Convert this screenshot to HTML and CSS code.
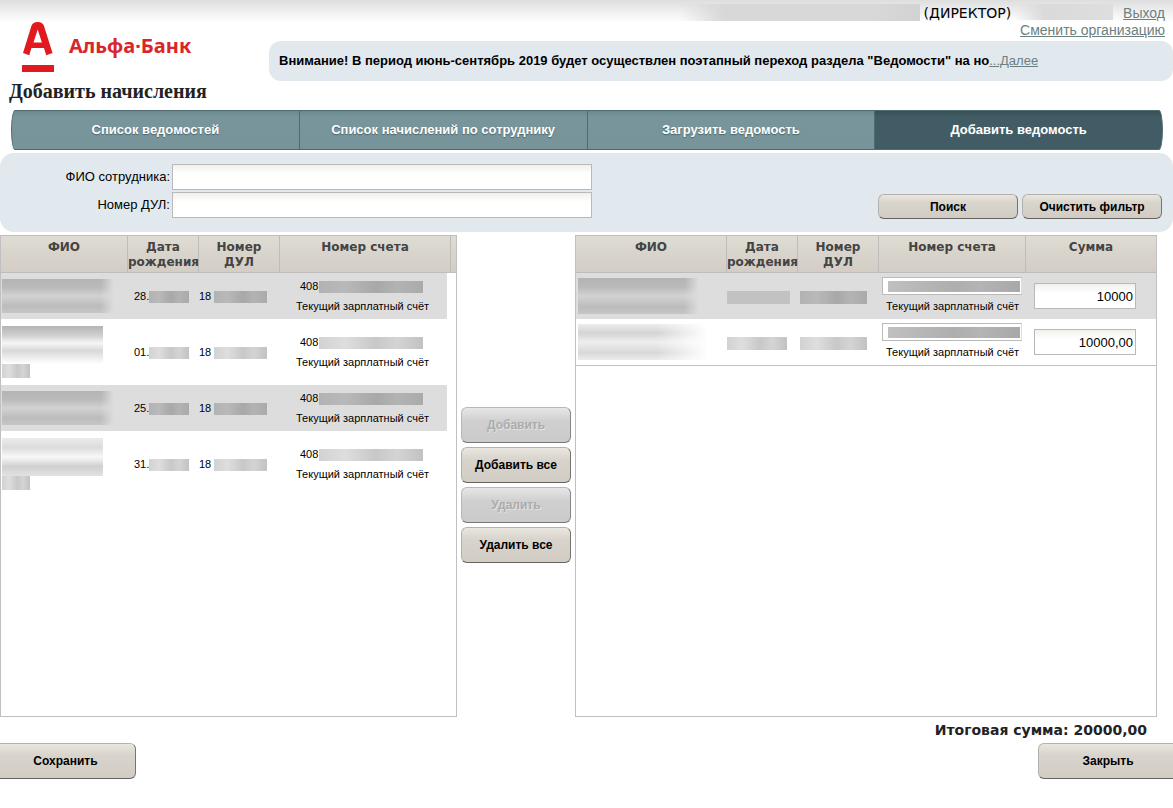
FILE: index.html
```html
<!DOCTYPE html>
<html lang="ru">
<head>
<meta charset="utf-8">
<title>Добавить начисления</title>
<link rel="stylesheet" href="styles.css">
</head>
<body>
<header class="header">
  <div class="brand">
    <div class="logo">
      <svg class="logo-mark" width="32" height="51" viewBox="0 0 32 51" aria-hidden="true">
        <path fill="#e01a1e" fill-rule="evenodd" d="M1 31 9.400 4Q10.800 0 15.700 0T22 4L30.500 31 24.200 33.200 22 26H9.400L7.300 33.200ZM11.500 20.500H19.900L15.700 7.500Z"/>
        <rect fill="#e01a1e" y="43" width="32" height="7"/>
      </svg>
      <span class="logo-name">Альфа·Банк</span>
    </div>
    <h1 class="title">Добавить начисления</h1>
  </div>
  <div class="header-side">
    <div class="user">
      <span class="mask mask-org"></span>
      <span class="role">(ДИРЕКТОР)</span>
      <span class="mask mask-user"></span>
      <a class="link exit" href="#">Выход</a>
    </div>
    <a class="link switch" href="#">Сменить организацию</a>
    <p class="notice"><b>Внимание! В период июнь-сентябрь 2019 будет осуществлен поэтапный переход раздела "Ведомости" на но</b><a class="link" href="#">...Далее</a></p>
  </div>
</header>

<nav class="tabs">
  <a class="tab" href="#">Список ведомостей</a>
  <a class="tab" href="#">Список начислений по сотруднику</a>
  <a class="tab" href="#">Загрузить ведомость</a>
  <a class="tab active" href="#">Добавить ведомость</a>
</nav>

<form class="filter">
  <div class="fields">
    <label for="fio">ФИО сотрудника:</label><input class="field" id="fio" type="text">
    <label for="doc">Номер ДУЛ:</label><input class="field" id="doc" type="text">
  </div>
  <div class="filter-actions">
    <button class="btn small" type="button">Поиск</button>
    <button class="btn small" type="button">Очистить фильтр</button>
  </div>
</form>

<main class="work">
  <section class="panel">
    <table class="grid source">
      <colgroup><col class="c-fio"><col class="c-date"><col class="c-doc"><col class="c-acc"><col class="c-scroll"></colgroup>
      <thead><tr><th>ФИО</th><th>Дата рождения</th><th>Номер<br>ДУЛ</th><th>Номер счета</th><th></th></tr></thead>
      <tbody>
        <tr class="odd">
          <td><span class="mask name dark wide"></span></td>
          <td class="date">28.<span class="mask date-mask dark"></span></td>
          <td>18 <span class="mask doc-mask dark"></span></td>
          <td class="acc"><span class="acc-no">408<span class="mask acc-mask dark"></span></span>Текущий зарплатный счёт</td><td></td>
        </tr>
        <tr class="tall">
          <td><span class="mask name"></span><span class="mask name-tail"></span></td>
          <td class="date">01.<span class="mask date-mask"></span></td>
          <td>18 <span class="mask doc-mask"></span></td>
          <td class="acc"><span class="acc-no">408<span class="mask acc-mask"></span></span>Текущий зарплатный счёт</td><td></td>
        </tr>
        <tr class="odd">
          <td><span class="mask name dark wide"></span></td>
          <td class="date">25.<span class="mask date-mask dark"></span></td>
          <td>18 <span class="mask doc-mask dark"></span></td>
          <td class="acc"><span class="acc-no">408<span class="mask acc-mask dark"></span></span>Текущий зарплатный счёт</td><td></td>
        </tr>
        <tr class="tall">
          <td><span class="mask name light"></span><span class="mask name-tail"></span></td>
          <td class="date">31.<span class="mask date-mask"></span></td>
          <td>18 <span class="mask doc-mask"></span></td>
          <td class="acc"><span class="acc-no">408<span class="mask acc-mask"></span></span>Текущий зарплатный счёт</td><td></td>
        </tr>
      </tbody>
    </table>
  </section>

  <div class="transfer">
    <button class="btn" type="button" disabled>Добавить</button>
    <button class="btn" type="button">Добавить все</button>
    <button class="btn" type="button" disabled>Удалить</button>
    <button class="btn" type="button">Удалить все</button>
  </div>

  <section class="panel">
    <table class="grid target">
      <colgroup><col class="r-fio"><col class="c-date"><col class="c-doc"><col class="r-acc"><col class="r-sum"></colgroup>
      <thead><tr><th>ФИО</th><th>Дата рождения</th><th>Номер<br>ДУЛ</th><th>Номер счета</th><th>Сумма</th></tr></thead>
      <tbody>
        <tr class="odd">
          <td><span class="mask name dark target-name"></span></td>
          <td><span class="mask full-date dark"></span></td>
          <td><span class="mask full-doc dark"></span></td>
          <td class="pick"><span class="pick-box"><span class="mask"></span></span><span class="pick-type">Текущий зарплатный счёт</span></td>
          <td class="sum"><input class="field" type="text" value="10000" aria-label="Сумма"></td>
        </tr>
        <tr class="last">
          <td><span class="mask name light target-name"></span></td>
          <td><span class="mask full-date"></span></td>
          <td><span class="mask full-doc"></span></td>
          <td class="pick"><span class="pick-box"><span class="mask"></span></span><span class="pick-type">Текущий зарплатный счёт</span></td>
          <td class="sum"><input class="field" type="text" value="10000,00" aria-label="Сумма"></td>
        </tr>
      </tbody>
    </table>
  </section>
</main>

<p class="total">Итоговая сумма: 20000,00</p>
<footer class="footer">
  <button class="btn save" type="button">Сохранить</button>
  <button class="btn close" type="button">Закрыть</button>
</footer>
</body>
</html>
```

FILE: styles.css
```css
* { box-sizing: border-box; }

body {
  margin: 0;
  background: #fff linear-gradient(#dedede, #fff) 0 0 / 100% 22px no-repeat;
  color: #000;
  font: 13px/16px "Liberation Sans", Arial, sans-serif;
  overflow-x: hidden;
}

p, h1 { margin: 0; }

/* Header */
.header { display: flex; height: 110px; }
.brand { flex: none; width: 269px; padding: 22px 0 0 9px; }
.logo { display: flex; gap: 15px; padding-left: 13px; height: 54px; }
.logo-mark { flex: none; }
.logo-name {
  color: #d9262a;
  font: bold 20px/48px "Noto Sans", sans-serif;
}
.title {
  color: #222;
  font: bold 20px/30px "Liberation Serif", serif;
  white-space: nowrap;
}
.header-side { flex: 1; min-width: 0; display: flex; flex-direction: column; padding-top: 4px; }
.user { display: flex; justify-content: flex-end; padding-right: 8px; height: 18px; line-height: 18px; }
.role { margin: 0 4px; font-family: "DejaVu Sans", Verdana, sans-serif; font-size: 14px; }
.mask.mask-org { width: 240px; height: 17px; background: linear-gradient(90deg, transparent, #d8d8d8 18%, #d8d8d8 80%, #d2d2d2); }
.mask.mask-user { width: 98px; height: 16px; background: linear-gradient(90deg, transparent, #dadada 30%, #dedede); }
.link { color: #6b8080; text-decoration: underline; }
.exit { margin-left: 10px; font-size: 14px; }
.switch { align-self: flex-end; padding-right: 8px; font-size: 14px; height: 19px; line-height: 17px; }
.notice {
  height: 40px;
  padding-left: 10px;
  border-radius: 12px;
  background: #e1e9ee;
  line-height: 40px;
  white-space: nowrap;
  overflow: hidden;
}

/* Tabs */
.tabs { display: flex; height: 40px; margin: 0 10px 3px 11px; }
.tab {
  flex: 1;
  background: linear-gradient(#6c8990, #78959b 6px, #76949a);
  border: solid #4f6a71;
  border-width: 1px 1px 1px 0;
  color: #fff;
  font-weight: bold;
  line-height: 37px;
  text-align: center;
  text-decoration: none;
  text-shadow: 0 1px 1px #4a646b;
}
.tab:first-child { border-left-width: 1px; border-radius: 4px 0 0 4px / 20px 0 0 20px; }
.tab.active { background: linear-gradient(#384f57, #415c64 6px); border-radius: 0 4px 4px 0 / 0 20px 20px 0; }

/* Filter */
.filter {
  display: flex;
  justify-content: space-between;
  height: 79px;
  margin-bottom: 3px;
  padding: 11px 11px 0 0;
  border-radius: 14px;
  background: #e1e9ee;
}
.fields { display: grid; grid-template-columns: 170px 420px; grid-auto-rows: 26px; gap: 2px; }
.fields label { text-align: right; line-height: 26px; }
.field {
  width: 100%;
  height: 26px;
  border: 1px solid #b9b9b9;
  background: linear-gradient(#f0f0ec, #fff 9px);
  font: 13px/18px "Liberation Sans", Arial, sans-serif;
}
.filter-actions { display: flex; gap: 4px; padding-top: 30px; }

.btn {
  height: 36px;
  border: 1px solid;
  border-color: #b5b2ad #77746f #66635f #b5b2ad;
  border-radius: 6px;
  background: linear-gradient(#e9e7e0, #d8d3cb 35%, #d2cdc4);
  color: #000;
  font: bold 12px/16px "Liberation Sans", Arial, sans-serif;
  padding: 0;
}
.btn:disabled { background: linear-gradient(#e6e6e6, #cfcfcf 40%, #cbcbcb); color: #acacac; text-shadow: 1px 1px 0 #e2e2e2; border-color: #b8b8b8 #858585 #777 #b8b8b8; }
.btn.small { width: 140px; height: 25px; }

/* Work area */
.work { display: grid; grid-template-columns: 457fr 118px 582fr; padding-right: 16px; min-height: 482px; }
.panel { border: solid #c0c0c0; border-width: 0 1px 1px; min-width: 0; }
.transfer { display: flex; flex-direction: column; gap: 4px; padding: 172px 4px 0; }

.grid { width: 100%; border-collapse: separate; border-spacing: 0; table-layout: fixed; }
.c-date { width: 71px; }
.c-doc { width: 81px; }
.c-acc { width: 171px; }
.c-scroll { width: 5px; }
.r-acc { width: 147px; }
.r-sum { width: 130px; }

.grid th {
  height: 38px;
  padding: 4px 0 2px;
  border: solid #bfbdbb;
  border-width: 1px 1px 1px 0;
  background: linear-gradient(#deddd3, #d9d4cb 50%, #d3cdc6);
  color: #444;
  font: bold 12px/15px "DejaVu Sans", Verdana, sans-serif;
  vertical-align: top;
}
.grid th:last-child { border-right: 0; }
.grid td { height: 46px; padding: 0; font-size: 11px; line-height: 20px; white-space: nowrap; vertical-align: middle; }
.grid .odd td { background: #ddd; }
.grid .tall td { height: 66px; }
.source .odd td:last-child { background: #fff; }
.grid td.date { padding-left: 6px; }
.grid td.acc { padding-left: 16px; border-right: 4px solid #fff; }
.acc-no { display: block; padding-left: 4px; }
.grid .last td { height: 47px; border-bottom: 1px solid #c0c0c0; }

/* Redacted values */
.mask { display: inline-block; vertical-align: middle; background: linear-gradient(90deg, #d2d2d2, #dedede 25%, #c8c8c8 55%, #d4d4d4 75%, #c2c2c2); }
.mask.dark { background: linear-gradient(90deg, #b2b2b2, #b9b9b9 25%, #a8a8a8 55%, #b3b3b3 75%, #aaa); }
.date-mask { width: 40px; height: 12px; }
.doc-mask { width: 53px; height: 12px; }
.acc-mask { width: 104px; height: 12px; margin-left: 1px; }
.mask.name { display: block; width: 101px; height: 38px; margin-left: 1px; background: linear-gradient(#b5b5b5, #d0d0d0 25%, #f6f6f6 45%, #d8d8d8 65%, #fff); }
.mask.name.light { background: linear-gradient(#ececec, #dcdcdc 25%, #f8f8f8 50%, #d0d0d0 75%, #e2e2e2); }
.mask.name.dark { background: linear-gradient(90deg, transparent 88%, #ddd), linear-gradient(#b4b4b4, #bababa 25%, #d2d2d2 50%, #bcbcbc 80%, #c6c6c6); }
.mask.name.wide { width: 112px; height: 34px; }
.mask.name.target-name { width: 130px; height: 36px; margin-left: 2px; }
.mask.target-name.light { background: linear-gradient(90deg, transparent 60%, #fff), linear-gradient(#ececec, #d4d4d4 25%, #eee 50%, #d8d8d8 80%, #ececec); }
.mask.name.target-name.dark { width: 121px; }
.name-tail { display: block; width: 28px; height: 14px; margin-left: 1px; }
.full-date { width: 60px; height: 13px; }
.mask.full-date.dark { width: 63px; background: #c2c2c2; }
.full-doc { width: 67px; height: 13px; margin-left: 2px; }

.grid td.pick { padding: 4px 0 0 3px; vertical-align: top; }
.pick-box { display: block; width: 140px; height: 18px; padding: 3px 0 0 5px; border: 1px solid #bbb; border-right-color: #ddd; background: #fff; line-height: 0; }
.pick-box .mask { width: 132px; height: 11px; background: linear-gradient(90deg, #c0c0c0, #aeaeae 50%, #b4b4b4 70%, #a8a8a8); }
.pick-type { display: block; padding-left: 4px; line-height: 22px; }
.grid td.sum { padding: 0 20px 0 8px; }
.sum .field { display: block; text-align: right; }

/* Bottom */
.total { padding: 5px 26px 0 0; color: #222; font: bold 14px/16px "DejaVu Sans", Verdana, sans-serif; text-align: right; }
.footer { display: flex; justify-content: space-between; padding-top: 5px; }
.save { width: 136px; padding-right: 4px; border-left: 0; border-radius: 0 6px 6px 0; }
.close { width: 135px; padding-left: 4px; border-right: 0; border-radius: 6px 0 0 6px; }
```
